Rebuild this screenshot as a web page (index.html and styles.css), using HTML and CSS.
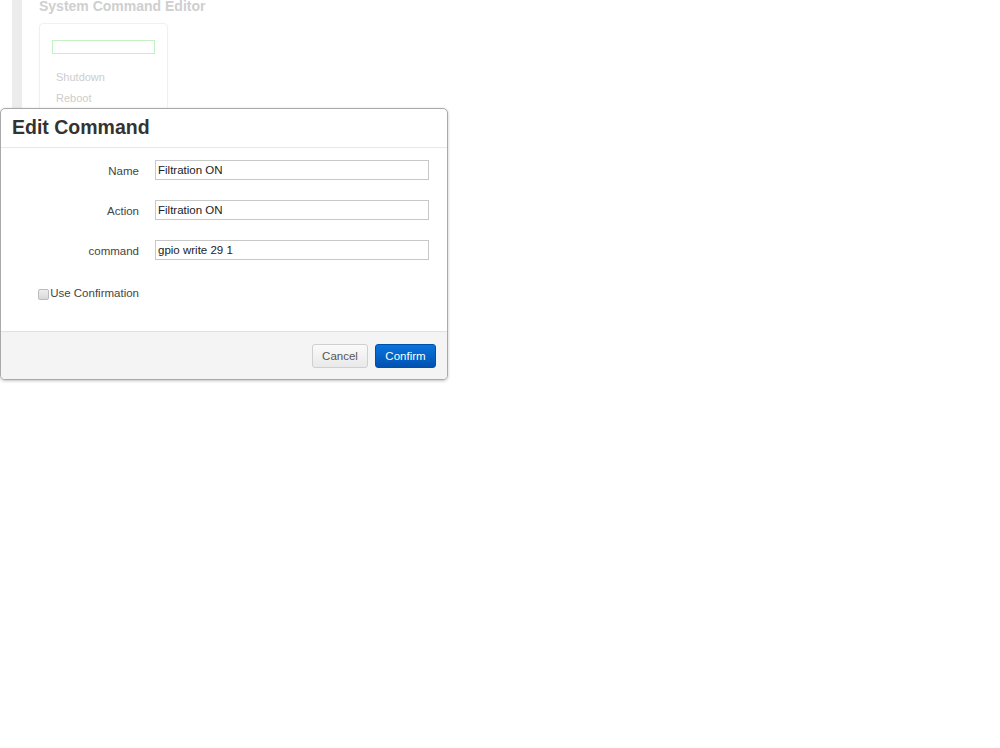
FILE: index.html
```html
<!DOCTYPE html>
<html lang="en">
<head>
    <meta charset="UTF-8">
    <title>System Command Editor</title>
    <link rel="stylesheet" href="styles.css">
</head>
<body>
    <div class="page">
        <div class="sidebar"></div>
        <div class="main">
            <h2 class="page-title">System Command Editor</h2>
            <div class="card">
                <div class="search"></div>
                <ul class="cmd-list">
                    <li>Shutdown</li>
                    <li>Reboot</li>
                </ul>
            </div>
        </div>
    </div>

    <div class="modal">
        <div class="modal-header">
            <h3>Edit Command</h3>
        </div>
        <div class="modal-body">
            <div class="row">
                <label class="label">Name</label>
                <input class="field" type="text" value="Filtration ON">
            </div>
            <div class="row">
                <label class="label">Action</label>
                <input class="field" type="text" value="Filtration ON">
            </div>
            <div class="row">
                <label class="label">command</label>
                <input class="field" type="text" value="gpio write 29 1">
            </div>
            <div class="row check-row">
                <label class="label"><span class="checkbox"></span>Use Confirmation</label>
            </div>
        </div>
        <div class="modal-footer">
            <button class="btn btn-cancel">Cancel</button>
            <button class="btn btn-primary">Confirm</button>
        </div>
    </div>
</body>
</html>
```

FILE: styles.css
```css
body {
    margin: 0;
    padding: 0;
    font-family: "Liberation Sans", Arial, sans-serif;
    background: #fff;
    width: 1000px;
    height: 748px;
    overflow: hidden;
    position: relative;
}

/* faded page behind the dialog */
.page {
    display: flex;
    align-items: flex-start;
    padding-left: 12px;
}
.sidebar {
    width: 10px;
    height: 220px;
    background: #ececec;
}
.main {
    margin-left: 17px;
}
.page-title {
    margin: -3px 0 0;
    font-size: 14px;
    line-height: 18px;
    font-weight: bold;
    color: #cfcfcf;
}
.card {
    margin-top: 8px;
    width: 127px;
    height: 120px;
    border: 1px solid #f0f0f0;
    border-radius: 4px;
    box-shadow: 0 1px 2px rgba(0, 0, 0, 0.04);
    padding-top: 16px;
}
.search {
    margin-left: 12px;
    width: 101px;
    height: 12px;
    border: 1px solid #c4f0c4;
}
.cmd-list {
    list-style: none;
    margin: 13px 0 0;
    padding: 0 0 0 16px;
    font-size: 11px;
    color: #cdcdcd;
}
.cmd-list li { line-height: 21px; }

/* dialog */
.modal {
    position: absolute;
    left: 0;
    top: 108px;
    width: 446px;
    background: #fff;
    border: 1px solid #a9a9a9;
    border-radius: 5px;
    box-shadow: 0 1px 3px rgba(0, 0, 0, 0.25);
    overflow: hidden;
}
.modal-header {
    height: 38px;
    border-bottom: 1px solid #e8e8e8;
    padding-left: 11px;
}
.modal-header h3 {
    margin: 0;
    font-size: 19.5px;
    line-height: 37px;
    color: #333;
    font-weight: bold;
}
.modal-body {
    padding: 12px 0 0;
    height: 171px;
    display: flex;
    flex-direction: column;
    gap: 20px;
}
.row {
    display: flex;
    align-items: center;
    height: 20px;
}
.label {
    width: 138px;
    text-align: right;
    font-size: 11.5px;
    color: #444;
    padding-top: 2px;
}
.field {
    margin-left: 16px;
    width: 268px;
    height: 18px;
    padding: 0 2px;
    box-sizing: content-box;
    border: 1px solid #c8c8c8;
    font-family: "Liberation Sans", Arial, sans-serif;
    font-size: 11.5px;
    color: #222;
    outline: none;
}
.check-row {
    margin-top: 4px;
    height: 16px;
}
.check-row .label {
    display: flex;
    align-items: center;
    justify-content: flex-end;
    color: #444;
}
.checkbox {
    display: inline-block;
    width: 9px;
    height: 9px;
    margin-top: 2px;
    margin-right: 1px;
    border: 1px solid #bbb;
    border-radius: 2px;
    background: linear-gradient(#eee, #d8d8d8);
}
.modal-footer {
    border-top: 1px solid #e0e0e0;
    background: #f4f4f4;
    height: 47px;
    display: flex;
    justify-content: flex-end;
    align-items: center;
    gap: 7px;
    padding-right: 11px;
}
.btn {
    height: 24px;
    padding: 0;
    font-family: "Liberation Sans", Arial, sans-serif;
    font-size: 11.5px;
    color: #555;
    border: 1px solid #cfcfcf;
    border-radius: 3px;
    background: linear-gradient(#fafafa, #e9e9e9);
    cursor: pointer;
}
.btn-cancel { width: 56px; }
.btn-primary {
    width: 61px;
    color: #fff;
    border-color: #0050a8;
    background: linear-gradient(#0a74dc, #0052b2);
}
```
